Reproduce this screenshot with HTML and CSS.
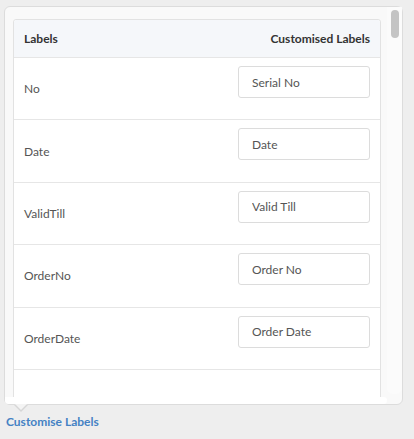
FILE: index.html
```html
<!DOCTYPE html>
<html lang="en">
<head>
  <meta charset="UTF-8">
  <meta name="viewport" content="width=device-width, initial-scale=1">
  <title>Customise Labels</title>
  <link rel="stylesheet" href="styles.css">
</head>
<body>

  <div class="popover">
    <div class="scroll-area">
      <div class="labels-table">
        <div class="row head">
          <div class="cell">Labels</div>
          <div class="cell right">Customised Labels</div>
        </div>
        <div class="row">
          <div class="cell label">No</div>
          <div class="cell field"><input type="text" value="Serial No"></div>
        </div>
        <div class="row">
          <div class="cell label">Date</div>
          <div class="cell field"><input type="text" value="Date"></div>
        </div>
        <div class="row">
          <div class="cell label">ValidTill</div>
          <div class="cell field"><input type="text" value="Valid Till"></div>
        </div>
        <div class="row">
          <div class="cell label">OrderNo</div>
          <div class="cell field"><input type="text" value="Order No"></div>
        </div>
        <div class="row">
          <div class="cell label">OrderDate</div>
          <div class="cell field"><input type="text" value="Order Date"></div>
        </div>
        <div class="row empty"></div>
      </div>
    </div>
    <div class="vscroll"><span class="thumb"></span></div>
    <div class="hscroll"></div>
    <span class="caret"></span>
  </div>

  <a href="#" class="toggle-link">Customise Labels</a>

</body>
</html>
```

FILE: styles.css
```css
* { margin: 0; padding: 0; box-sizing: border-box; }
body {
  background: #eeeeee;
  font-family: Lato, 'Open Sans', sans-serif;
  font-size: 12px;
  color: #555;
  padding: 6px 0 0 4px;
  height: 439px;
  overflow: hidden;
}

/* popover panel */
.popover {
  position: relative;
  width: 399px; height: 399px;
  border: 1px solid #dcdcdc;
  border-radius: 6px;
  background: #f9f9f9;
  display: grid;
  grid-template-columns: 382px 1fr;
  grid-template-rows: 390px 1fr;
}
.scroll-area {
  grid-column: 1; grid-row: 1;
  overflow: hidden;
  padding: 12px 6px 0 8px;
}
.vscroll {
  grid-column: 2; grid-row: 1 / 3;
  padding: 3px 2px 0 4px;
  margin-bottom: 10px;
  background: #fbfbfb;
  border-radius: 0 0 6px 6px;
}
.thumb {
  display: block;
  width: 8px; height: 28px;
  border-radius: 4px;
  background: #c4c4c4;
}
.hscroll {
  grid-column: 1; grid-row: 2;
  background: #fff;
  border-radius: 0 4px 4px 4px;
}
.caret {
  position: absolute;
  left: 9px; bottom: -8px;
  width: 0; height: 0;
  border-left: 7px solid transparent;
  border-right: 7px solid transparent;
  border-top: 7px solid #d6d6d6;
}
.caret::after {
  content: "";
  position: absolute;
  left: -6px; top: -8px;
  border-left: 6px solid transparent;
  border-right: 6px solid transparent;
  border-top: 6px solid #f4f4f4;
}

/* table */
.labels-table {
  border: 1px solid #e2e2e2;
  border-radius: 3px;
  background: #fff;
}
.row {
  display: flex;
  justify-content: space-between;
  height: 62.4px;
  border-top: 1px solid #e6e6e6;
}
.row.empty { height: 40px; }
.row.head {
  height: 37px;
  border-top: none;
  background: #f5f7fa;
  border-radius: 3px 3px 0 0;
  align-items: center;
  color: #333;
  font-weight: bold;
}
.cell { padding: 0 10px; }
.cell.label {
  display: flex;
  align-items: center;
}
.cell.field { padding-top: 8px; }
.cell.field input {
  width: 132px; height: 32px;
  border: 1px solid #dcdcdc;
  border-radius: 3px;
  padding: 0 0 0 13px;
  font: 12px Lato, 'Open Sans', sans-serif;
  color: #555;
  background: #fff;
  outline: none;
}

.toggle-link {
  display: inline-block;
  margin: 9px 0 0 2px;
  color: #4582c4;
  font-weight: bold;
  text-decoration: none;
}
```
